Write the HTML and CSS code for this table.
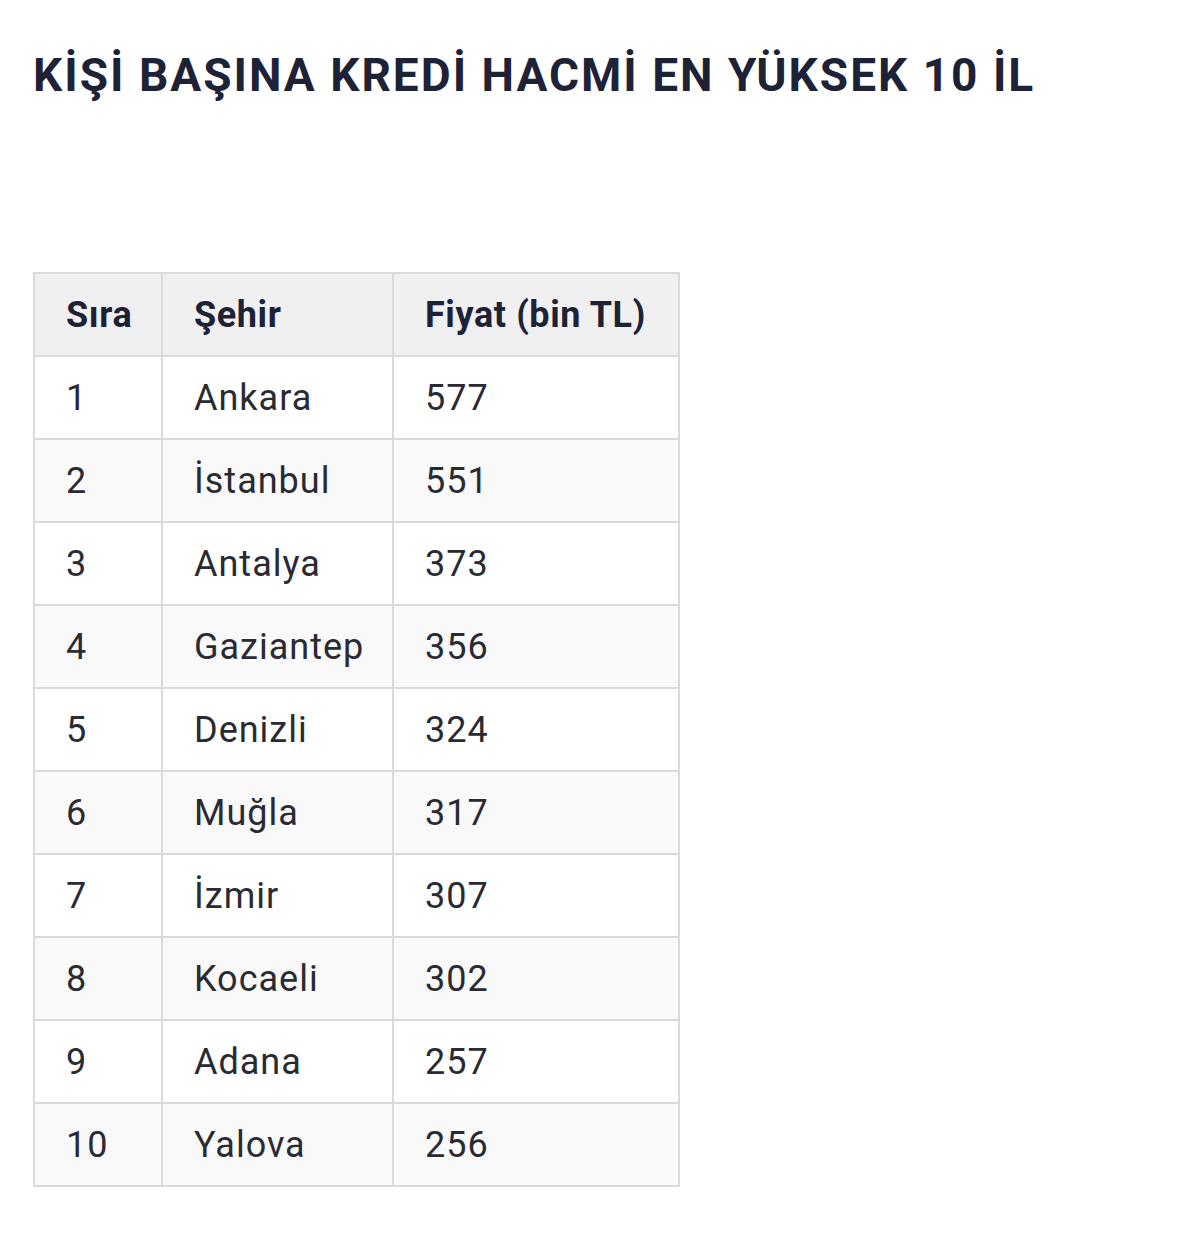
FILE: index.html
```html
<!DOCTYPE html>
<html lang="tr">
<head>
<meta charset="utf-8">
<title>Kişi başına kredi hacmi</title>
<link rel="stylesheet" href="styles.css">
</head>
<body>
<h2 class="title">KİŞİ BAŞINA KREDİ HACMİ EN YÜKSEK 10 İL</h2>
<table class="data">
  <colgroup>
    <col class="c1"><col class="c2"><col class="c3">
  </colgroup>
  <thead>
    <tr><th>Sıra</th><th>Şehir</th><th>Fiyat (bin TL)</th></tr>
  </thead>
  <tbody>
    <tr><td>1</td><td>Ankara</td><td>577</td></tr>
    <tr><td>2</td><td>İstanbul</td><td>551</td></tr>
    <tr><td>3</td><td>Antalya</td><td>373</td></tr>
    <tr><td>4</td><td>Gaziantep</td><td>356</td></tr>
    <tr><td>5</td><td>Denizli</td><td>324</td></tr>
    <tr><td>6</td><td>Muğla</td><td>317</td></tr>
    <tr><td>7</td><td>İzmir</td><td>307</td></tr>
    <tr><td>8</td><td>Kocaeli</td><td>302</td></tr>
    <tr><td>9</td><td>Adana</td><td>257</td></tr>
    <tr><td>10</td><td>Yalova</td><td>256</td></tr>
  </tbody>
</table>
</body>
</html>
```

FILE: styles.css
```css
html, body {
  margin: 0;
  padding: 0;
  background: #ffffff;
}
body {
  padding: 0 33px;
  font-family: Roboto, "Liberation Sans", Arial, sans-serif;
  color: #2a2a33;
}
.title {
  margin: 0;
  padding-top: 48px;
  font-size: 46px;
  line-height: 54px;
  font-weight: 700;
  color: #1e2236;
  letter-spacing: 2px;
}
.data {
  margin-top: 170px;
  border-collapse: collapse;
  table-layout: fixed;
  width: 645px;
  font-size: 36px;
  letter-spacing: 1px;
}
.c1 { width: 128px; }
.c2 { width: 231px; }
.c3 { width: 286px; }
.data th,
.data td {
  border: 2px solid #dadada;
  height: 83px;
  box-sizing: border-box;
  padding: 0 4px 0 31px;
  text-align: left;
  vertical-align: middle;
  line-height: 40px;
  white-space: nowrap;
}
.data th {
  background: #f0f0f0;
  font-weight: 700;
  color: #1e2236;
  letter-spacing: 0.6px;
}
.data tbody tr:nth-child(odd) td { background: #ffffff; }
.data tbody tr:nth-child(even) td { background: #f9f9f9; }
```
